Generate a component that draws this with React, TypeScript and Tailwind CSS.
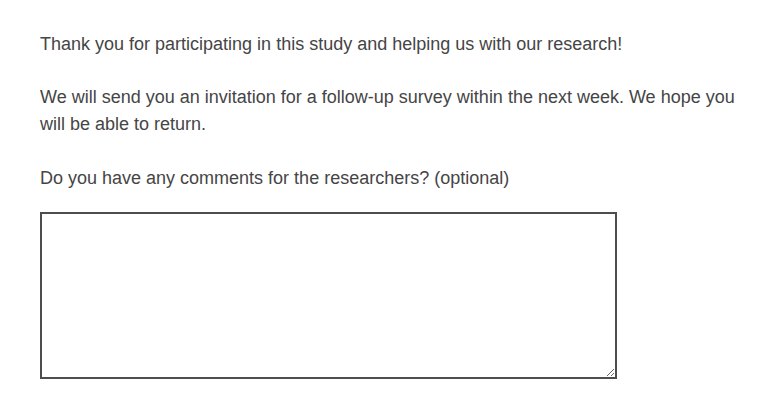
export default function App() {
  return (
    <main className="min-h-screen bg-white pl-10 pt-[31px] font-['Liberation_Sans',Arial,sans-serif] text-[18px] leading-[27px] text-[#454545]">
      <div className="w-[712px]">
        <p className="mb-[26px]">
          Thank you for participating in this study and helping us with our research!
        </p>
        <p className="mb-[27px]">
          We will send you an invitation for a follow-up survey within the next week. We hope you
          will be able to return.
        </p>
        <label htmlFor="comments" className="block">
          Do you have any comments for the researchers? (optional)
        </label>
        <textarea
          id="comments"
          className="mt-[20px] block h-[167px] w-[577px] resize border-2 border-[#4d4d4d] bg-white outline-none"
        />
      </div>
    </main>
  );
}
